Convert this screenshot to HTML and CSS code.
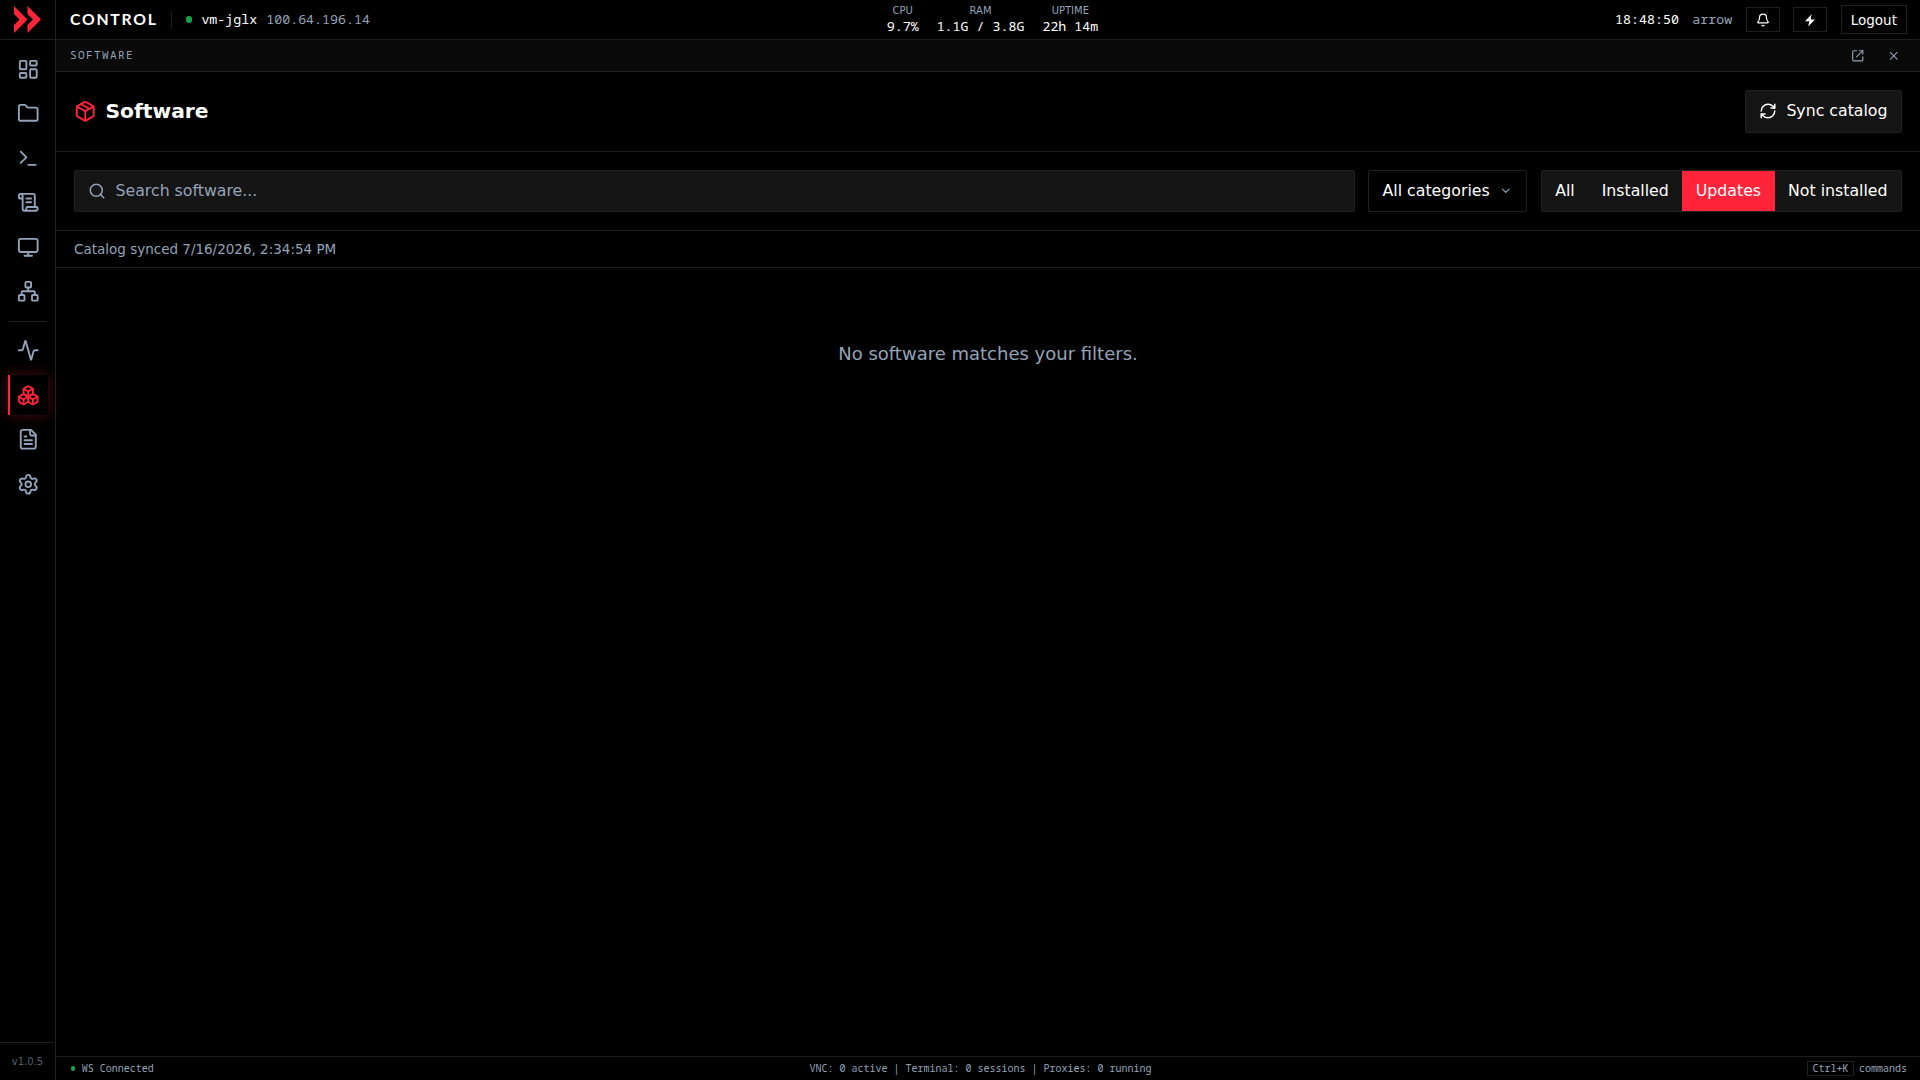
FILE: index.html
```html
<!DOCTYPE html>
<html lang="en">
<head>
  <meta charset="UTF-8" />
  <title>Control - Software</title>
  <link rel="stylesheet" href="styles.css">
</head>
<body>
  <div class="app">
    <aside class="sidebar">
      <a href="#" class="logo">
        <svg width="27" height="27" viewBox="0 0 27 27"><path d="M0 0L13.5 13.5L0 27V19L5.5 13.5L0 8Z M13.5 0L27 13.5L13.5 27V19L19 13.5L13.5 8Z"/></svg>
      </a>
      <nav class="nav">
        <a href="#" class="nav-item"><svg class="icon" viewBox="0 0 24 24"><rect width="7" height="9" x="3" y="3" rx="1"/><rect width="7" height="5" x="14" y="3" rx="1"/><rect width="7" height="9" x="14" y="12" rx="1"/><rect width="7" height="5" x="3" y="16" rx="1"/></svg></a>
        <a href="#" class="nav-item"><svg class="icon" viewBox="0 0 24 24"><path d="M20 20a2 2 0 0 0 2-2V8a2 2 0 0 0-2-2h-7.9a2 2 0 0 1-1.69-.9L9.6 3.9A2 2 0 0 0 7.93 3H4a2 2 0 0 0-2 2v13a2 2 0 0 0 2 2Z"/></svg></a>
        <a href="#" class="nav-item"><svg class="icon" viewBox="0 0 24 24"><path d="m4 17 6-6-6-6"/><path d="M12 19h8"/></svg></a>
        <a href="#" class="nav-item"><svg class="icon" viewBox="0 0 24 24"><path d="M15 12h-5"/><path d="M15 8h-5"/><path d="M19 17V5a2 2 0 0 0-2-2H4"/><path d="M8 21h12a2 2 0 0 0 2-2v-1a1 1 0 0 0-1-1H11a1 1 0 0 0-1 1v1a2 2 0 1 1-4 0V5a2 2 0 1 0-4 0v2a1 1 0 0 0 1 1h3"/></svg></a>
        <a href="#" class="nav-item"><svg class="icon" viewBox="0 0 24 24"><rect width="20" height="14" x="2" y="3" rx="2"/><path d="M8 21h8"/><path d="M12 17v4"/></svg></a>
        <a href="#" class="nav-item"><svg class="icon" viewBox="0 0 24 24"><rect x="16" y="16" width="6" height="6" rx="1"/><rect x="2" y="16" width="6" height="6" rx="1"/><rect x="9" y="2" width="6" height="6" rx="1"/><path d="M5 16v-3a1 1 0 0 1 1-1h12a1 1 0 0 1 1 1v3"/><path d="M12 12V8"/></svg></a>
        <div class="nav-divider"></div>
        <a href="#" class="nav-item"><svg class="icon" viewBox="0 0 24 24"><path d="M22 12h-2.48a2 2 0 0 0-1.93 1.46l-2.35 8.36a.25.25 0 0 1-.48 0L9.24 2.18a.25.25 0 0 0-.48 0l-2.35 8.36A2 2 0 0 1 4.49 12H2"/></svg></a>
        <a href="#" class="nav-item active"><svg class="icon" viewBox="0 0 24 24"><path d="M2.97 12.92A2 2 0 0 0 2 14.63v3.24a2 2 0 0 0 .97 1.71l3 1.8a2 2 0 0 0 2.06 0L12 19v-5.5l-5-3-4.03 2.42Z"/><path d="m7 16.5-4.74-2.85"/><path d="m7 16.5 5-3"/><path d="M7 16.5v5.17"/><path d="M12 13.5V19l3.97 2.38a2 2 0 0 0 2.06 0l3-1.8a2 2 0 0 0 .97-1.71v-3.24a2 2 0 0 0-.97-1.71L17 10.5l-5 3Z"/><path d="m17 16.5-5-3"/><path d="m17 16.5 4.74-2.85"/><path d="M17 16.5v5.17"/><path d="M7.97 4.42A2 2 0 0 0 7 6.13v4.37l5 3 5-3V6.13a2 2 0 0 0-.97-1.71l-3-1.8a2 2 0 0 0-2.06 0l-3 1.8Z"/><path d="M12 8 7.26 5.15"/><path d="m12 8 4.74-2.85"/><path d="M12 13.5V8"/></svg></a>
        <a href="#" class="nav-item"><svg class="icon" viewBox="0 0 24 24"><path d="M15 2H6a2 2 0 0 0-2 2v16a2 2 0 0 0 2 2h12a2 2 0 0 0 2-2V7Z"/><path d="M14 2v4a2 2 0 0 0 2 2h4"/><path d="M10 9H8"/><path d="M16 13H8"/><path d="M16 17H8"/></svg></a>
        <a href="#" class="nav-item"><svg class="icon" viewBox="0 0 24 24"><path d="M9.671 4.136a2.34 2.34 0 0 1 4.659 0 2.34 2.34 0 0 0 3.319 1.915 2.34 2.34 0 0 1 2.33 4.033 2.34 2.34 0 0 0 0 3.831 2.34 2.34 0 0 1-2.33 4.033 2.34 2.34 0 0 0-3.319 1.915 2.34 2.34 0 0 1-4.659 0 2.34 2.34 0 0 0-3.32-1.915 2.34 2.34 0 0 1-2.33-4.033 2.34 2.34 0 0 0 0-3.831A2.34 2.34 0 0 1 6.35 6.051a2.34 2.34 0 0 0 3.319-1.915"/><circle cx="12" cy="12" r="3"/></svg></a>
      </nav>
      <div class="version">v1.0.5</div>
    </aside>

    <div class="main">
      <header class="topbar">
        <div class="topbar-left">
          <span class="brand">CONTROL</span>
          <span class="separator"></span>
          <div class="host">
            <span class="dot"></span>
            <span class="mono">vm-jglx</span>
            <span class="mono muted">100.64.196.14</span>
          </div>
        </div>
        <div class="stats">
          <div class="stat"><span class="stat-label">CPU</span><span>9.7%</span></div>
          <div class="stat"><span class="stat-label">RAM</span><span>1.1G / 3.8G</span></div>
          <div class="stat"><span class="stat-label">UPTIME</span><span>22h 14m</span></div>
        </div>
        <div class="topbar-right">
          <span class="mono">18:48:50</span>
          <span class="mono muted">arrow</span>
          <button class="top-btn"><svg class="icon" viewBox="0 0 24 24"><path d="M10.268 21a2 2 0 0 0 3.464 0"/><path d="M3.262 15.326A1 1 0 0 0 4 17h16a1 1 0 0 0 .74-1.673C19.41 13.956 18 12.499 18 8A6 6 0 0 0 6 8c0 4.499-1.411 5.956-2.738 7.326"/></svg></button>
          <button class="top-btn"><svg class="bolt" viewBox="0 0 14 14"><path d="M8.6 1.2L2 8.2H6.3L5.2 13.6L12 6.4H7.6Z"/></svg></button>
          <button class="logout">Logout</button>
        </div>
      </header>

      <div class="panel-bar">
        <span class="panel-name">SOFTWARE</span>
        <div class="panel-actions">
          <svg class="icon" viewBox="0 0 24 24"><path d="M15 3h6v6"/><path d="M10 14 21 3"/><path d="M21 14v5a2 2 0 0 1-2 2H5a2 2 0 0 1-2-2V5a2 2 0 0 1 2-2h5"/></svg>
          <svg class="icon" viewBox="0 0 24 24"><path d="M18 6 6 18"/><path d="m6 6 12 12"/></svg>
        </div>
      </div>

      <div class="page-header">
        <h1 class="title">
          <svg class="icon" viewBox="0 0 24 24"><path d="M11 21.73a2 2 0 0 0 2 0l7-4A2 2 0 0 0 21 16V8a2 2 0 0 0-1-1.73l-7-4a2 2 0 0 0-2 0l-7 4A2 2 0 0 0 3 8v8a2 2 0 0 0 1 1.73z"/><path d="M12 22V12"/><path d="M3.29 7 12 12l8.71-5"/><path d="m7.5 4.27 9 5.15"/></svg>
          Software
        </h1>
        <button class="sync-btn">
          <svg class="icon" viewBox="0 0 24 24"><path d="M3 12a9 9 0 0 1 9-9 9.75 9.75 0 0 1 6.74 2.74L21 8"/><path d="M21 3v5h-5"/><path d="M21 12a9 9 0 0 1-9 9 9.75 9.75 0 0 1-6.74-2.74L3 16"/><path d="M8 16H3v5"/></svg>
          Sync catalog
        </button>
      </div>

      <div class="toolbar">
        <label class="search">
          <svg class="icon" viewBox="0 0 24 24"><path d="m21 21-4.34-4.34"/><circle cx="11" cy="11" r="8"/></svg>
          <input type="text" placeholder="Search software...">
        </label>
        <button class="category">
          All categories
          <svg class="icon" viewBox="0 0 24 24"><path d="m6 9 6 6 6-6"/></svg>
        </button>
        <div class="filters">
          <button>All</button>
          <button>Installed</button>
          <button class="selected">Updates</button>
          <button>Not installed</button>
        </div>
      </div>

      <div class="sync-info">Catalog synced 7/16/2026, 2:34:54 PM</div>

      <div class="content">
        <p class="empty">No software matches your filters.</p>
      </div>

      <footer class="statusbar">
        <div class="ws"><span class="dot"></span>WS Connected</div>
        <div>VNC: 0 active | Terminal: 0 sessions | Proxies: 0 running</div>
        <div class="shortcut"><kbd>Ctrl+K</kbd>commands</div>
      </footer>
    </div>
  </div>
</body>
</html>
```
FILE: styles.css
```css
* {
  box-sizing: border-box;
}

html {
  font-size: 18px;
}

body {
  margin: 0;
  background: #000;
  color: #fff;
  font-family: "DejaVu Sans", sans-serif;
  font-size: 0.875rem;
  line-height: 22.5px;
  overflow: hidden;
}

button {
  font: inherit;
  color: inherit;
  background: none;
  border: 0;
  padding: 0;
  cursor: pointer;
}

.icon {
  display: block;
  flex-shrink: 0;
  fill: none;
  stroke: currentColor;
  stroke-width: 2;
  stroke-linecap: round;
  stroke-linejoin: round;
}

.app {
  display: flex;
  height: 100vh;
}

.muted {
  color: #94a3b8;
}

.mono {
  padding-bottom: 1px;
  font-family: "Noto Sans Mono", "DejaVu Sans Mono", monospace;
  font-size: 13.3px;
}

/* Sidebar */
.sidebar {
  display: flex;
  flex-direction: column;
  width: 56px;
  border-right: 1px solid #202020;
}

.logo {
  display: flex;
  align-items: center;
  justify-content: center;
  height: 40px;
  border-bottom: 1px solid #202020;
}

.logo svg {
  fill: #ff2439;
}

.nav {
  flex: 1;
  display: flex;
  flex-direction: column;
  align-items: center;
  gap: 4.5px;
  padding: 9px 0 0 1px;
}

.nav-item {
  display: flex;
  align-items: center;
  justify-content: center;
  width: 40px;
  height: 40px;
  color: #94a3b8;
}

.nav-item .icon {
  width: 22.5px;
  height: 22.5px;
}

.nav-item.active {
  color: #ff2439;
  box-shadow: inset 2px 0 0 #ff2439, 0 0 12px rgba(255, 36, 57, 0.3);
}

.nav-divider {
  width: 37px;
  height: 1px;
  margin: 4.5px 1px 4.5px 0;
  background: #202020;
}

.version {
  height: 38px;
  border-top: 1px solid #202020;
  color: #56606f;
  font-size: 10px;
  line-height: 37px;
  text-align: center;
}

/* Top bar */
.main {
  flex: 1;
  display: flex;
  flex-direction: column;
  min-width: 0;
}

.topbar {
  display: flex;
  align-items: center;
  justify-content: space-between;
  height: 40px;
  padding: 0 13px 0 14px;
  border-bottom: 1px solid #202020;
  font-size: 13.5px;
  line-height: 18px;
}

.topbar-left,
.topbar-right {
  display: flex;
  align-items: center;
  gap: 13.5px;
}

.brand {
  padding-bottom: 1px;
  font-family: Lato, sans-serif;
  font-size: 15.75px;
  font-weight: 700;
  letter-spacing: 1.75px;
}

.separator {
  width: 1px;
  height: 18px;
  background: #202020;
}

.host {
  display: flex;
  align-items: center;
  gap: 9px;
}

.dot {
  width: 6.75px;
  height: 6.75px;
  border-radius: 50%;
  background: #16a34a;
}

.stats {
  display: flex;
  gap: 18px;
  font-family: "Noto Sans Mono", "DejaVu Sans Mono", monospace;
  font-size: 13.3px;
}

.stat {
  display: flex;
  flex-direction: column;
  align-items: center;
  line-height: 17px;
}

.stat-label {
  color: #94a3b8;
  font-family: "DejaVu Sans", sans-serif;
  font-size: 10px;
  line-height: 14px;
}

.top-btn {
  padding: 4.5px 9px;
  border: 1px solid #202020;
}

.top-btn svg {
  display: block;
  width: 14px;
  height: 14px;
}

.bolt {
  fill: #fff;
}

.logout {
  padding: 4.5px 9px;
  border: 1px solid #202020;
}

/* Panel title bar */
.panel-bar {
  display: flex;
  align-items: center;
  justify-content: space-between;
  height: 32px;
  padding: 0 20px 0 14px;
  background: #0a0a0a;
  border-bottom: 1px solid #202020;
  color: #94a3b8;
}

.panel-name {
  font-family: "Noto Sans Mono", "DejaVu Sans Mono", monospace;
  font-size: 11px;
  letter-spacing: 1.4px;
}

.panel-actions {
  display: flex;
  gap: 22px;
}

.panel-actions .icon {
  width: 13.5px;
  height: 13.5px;
}

/* Page */
.page-header {
  display: flex;
  align-items: center;
  justify-content: space-between;
  padding: 18px;
  border-bottom: 1px solid #202020;
}

.title {
  display: flex;
  align-items: center;
  gap: 9px;
  margin: 0;
  font-size: 1.125rem;
  font-weight: 700;
}

.title .icon {
  width: 22.5px;
  height: 22.5px;
  color: #ff2439;
}

.sync-btn {
  display: flex;
  align-items: center;
  gap: 9px;
  padding: 9px 13.5px;
  background: #141414;
  border: 1px solid #202020;
  border-radius: 2px;
}

.sync-btn .icon,
.search .icon {
  width: 18px;
  height: 18px;
}

.toolbar {
  display: flex;
  gap: 13.5px;
  padding: 18px;
  border-bottom: 1px solid #202020;
}

.search {
  flex: 1;
  display: flex;
  align-items: center;
  gap: 9.5px;
  padding: 0 13px;
  background: #141414;
  border: 1px solid #202020;
  border-radius: 2px;
  color: #94a3b8;
}

.search input {
  flex: 1;
  padding: 0;
  border: 0;
  outline: none;
  background: none;
  color: #fff;
  font: inherit;
}

.search input::placeholder {
  color: #94a3b8;
}

.category {
  display: flex;
  align-items: center;
  gap: 9.5px;
  padding: 9px 13.5px;
  border: 1px solid #202020;
  border-radius: 2px;
}

.category .icon {
  width: 13.5px;
  height: 13.5px;
  color: #94a3b8;
}

.filters {
  display: flex;
  background: #141414;
  border: 1px solid #202020;
  border-radius: 2px;
}

.filters button {
  padding: 9px 13.5px;
}

.filters .selected {
  background: #ff2439;
}

.sync-info {
  padding: 9px 18px;
  border-bottom: 1px solid #202020;
  color: #94a3b8;
  font-size: 13.5px;
  line-height: 18px;
}

.content {
  flex: 1;
}

.empty {
  margin: 72px 0 0;
  color: #94a3b8;
  font-size: 18px;
  line-height: 27px;
  text-align: center;
}

/* Status bar */
.statusbar {
  display: flex;
  align-items: center;
  justify-content: space-between;
  height: 24px;
  padding: 0 13px 0 14.5px;
  border-top: 1px solid #202020;
  color: #94a3b8;
  font-family: "Noto Sans Mono", "DejaVu Sans Mono", monospace;
  font-size: 10px;
  line-height: 15px;
}

.ws,
.shortcut {
  display: flex;
  align-items: center;
  gap: 6.75px;
}

.ws .dot {
  width: 4.5px;
  height: 4.5px;
}

.shortcut {
  gap: 5px;
}

.shortcut kbd {
  padding: 0 4.5px;
  border: 1px solid #202020;
  font-family: inherit;
  font-size: 10px;
  line-height: 13px;
}
```
